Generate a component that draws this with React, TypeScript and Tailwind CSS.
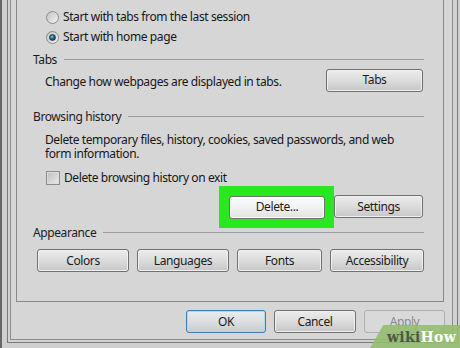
import React from "react";

const font = { fontFamily: '"Noto Sans", "Open Sans", sans-serif' };

function Btn({
  label,
  w,
  kind = "normal",
}: {
  label: string;
  w: string;
  kind?: "normal" | "hot" | "default" | "disabled";
}) {
  const base = `${w} h-[23px] shrink-0 rounded-[3px] border text-[12px] tracking-[-0.4px] leading-none flex items-center justify-center`;
  if (kind === "disabled") {
    return (
      <div className={`${base} border-[#adb2b5] bg-[#d9d9d9] text-[#8a8a8a]`}>
        {label}
      </div>
    );
  }
  if (kind === "hot") {
    return (
      <div
        className={`${base} border-[#707070] bg-gradient-to-b from-[#fafafa] via-[#f1f1f1] to-[#e2e2e2] text-[#1b1b1b] shadow-[inset_0_0_0_1px_#ffffff]`}
      >
        {label}
      </div>
    );
  }
  if (kind === "default") {
    return (
      <div
        className={`${base} border-[#3c7fb1] bg-gradient-to-b from-[#e8ecee] via-[#dcdfe1] to-[#c9cccd] text-[#1b1b1b] shadow-[inset_0_0_0_1px_#a8dce8]`}
      >
        {label}
      </div>
    );
  }
  return (
    <div
      className={`${base} border-[#707070] bg-gradient-to-b from-[#ececec] via-[#dcdcdc] to-[#c6c6c6] text-[#1b1b1b] shadow-[inset_0_0_0_1px_#f0f0f0]`}
    >
      {label}
    </div>
  );
}

function Heading({ label }: { label: string }) {
  return (
    <div className="flex h-[18px] items-center gap-[7px] pl-[16px] pr-[19px] text-[12px] tracking-[-0.4px] text-[#1b1b1b]">
      <span>{label}</span>
      <div className="flex-1 h-[2px] border-t border-[#9c9c9c] border-b-white" />
    </div>
  );
}

function Radio({ checked }: { checked?: boolean }) {
  return (
    <div className="flex h-[13px] w-[13px] items-center justify-center rounded-full border border-[#8a8b8b] bg-gradient-to-br from-[#c4c4c4] to-[#f2f2f2]">
      {checked && (
        <div className="h-[7px] w-[7px] rounded-full border border-[#1f3b50] bg-[radial-gradient(circle_at_40%_35%,#7fc6e8_0%,#1e6a92_45%,#0b2436_100%)]" />
      )}
    </div>
  );
}

export default function App() {
  return (
    <div
      style={font}
      className="relative h-[348px] w-[460px] overflow-hidden border-l-2 border-[#666666] bg-[#cfcfcf] pl-[5px] pr-[2px] text-[12px] tracking-[-0.4px]"
    >
      <div className="h-[343px] border-x border-b border-[#7a7a7a] bg-[#d2d2d2] pl-[2px] pr-[4px]">
        <div className="h-[340px] border-x border-b border-[#8c8c8c] bg-[#d6d6d6]">
          {/* tab page */}
          <div className="ml-[5px] flex h-[302px] w-[428px] flex-col border-x border-b border-[#8a8a8a] pt-[7px] text-[#161616]">
            <div className="flex h-[20px] items-center gap-[4px] pl-[29px]">
              <Radio />
              <span>Start with tabs from the last session</span>
            </div>
            <div className="flex h-[20px] items-center gap-[4px] pl-[29px]">
              <Radio checked />
              <span>Start with home page</span>
            </div>

            <div className="mt-[4px]">
              <Heading label="Tabs" />
            </div>
            <div className="flex h-[22px] items-center justify-between pl-[28px] pr-[20px]">
              <span className="mt-[4px]">Change how webpages are displayed in tabs.</span>
              <Btn label="Tabs" w="w-[97px]" />
            </div>

            <div className="mt-[17px]">
              <Heading label="Browsing history" />
            </div>
            <p className="mt-[7px] pl-[28px] pr-[40px] leading-[14px]">
              Delete temporary files, history, cookies, saved passwords, and web form information.
            </p>
            <div className="mt-[8px] flex h-[18px] items-center gap-[4px] pl-[29px]">
              <div className="h-[14px] w-[14px] border border-[#8a8b8b] bg-gradient-to-br from-[#bdbdbd] to-[#ececec] shadow-[inset_0_0_0_1px_#dcdcdc]" />
              <span>Delete browsing history on exit</span>
            </div>
            <div className="mt-[8px] flex items-center justify-end pr-[20px]">
              <div className="-my-[10px] bg-[#2ae81f] pb-[9px] pl-[10px] pr-[9px] pt-[10px]">
                <Btn label="Delete..." w="w-[96px]" kind="hot" />
              </div>
              <Btn label="Settings" w="w-[89px]" />
            </div>

            <div className="mt-[6px]">
              <Heading label="Appearance" />
            </div>
            <div className="mt-[7px] flex gap-[8px] pl-[20px] pr-[19px]">
              <Btn label="Colors" w="w-[92px]" />
              <Btn label="Languages" w="w-[92px]" />
              <Btn label="Fonts" w="w-[85px]" />
              <Btn label="Accessibility" w="w-[94px]" />
            </div>
          </div>

          {/* dialog buttons */}
          <div className="mt-[8px] flex justify-end gap-[8px] pr-[7px]">
            <Btn label="OK" w="w-[80px]" kind="default" />
            <Btn label="Cancel" w="w-[82px]" />
            <Btn label="Apply" w="w-[81px]" kind="disabled" />
          </div>
        </div>
      </div>

      {/* wikiHow watermark */}
      <div className="absolute left-[368px] top-[325px] flex h-[23px] w-[92px] items-end">
        <div className="absolute inset-0 origin-bottom-left -skew-x-[30deg] bg-[#94bc70]/90" />
        <span
          className="relative pb-[4px] pl-[17px] text-[14px] font-bold leading-none tracking-[0.3px]"
          style={{ fontFamily: '"DejaVu Serif", "Liberation Serif", serif' }}
        >
          <span className="text-[#4f5746]">wiki</span>
          <span className="text-white">How</span>
        </span>
      </div>
    </div>
  );
}
